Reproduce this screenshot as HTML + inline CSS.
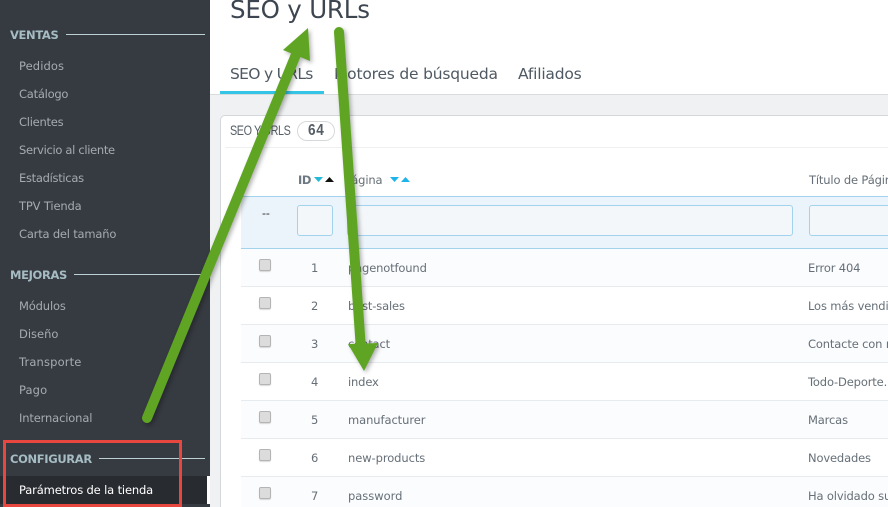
<!DOCTYPE html>
<html lang="es">
<head>
<meta charset="utf-8">
<style>
html,body{margin:0;padding:0;background:#fff}
body{width:888px;height:507px;position:relative;overflow:hidden;font-family:"DejaVu Sans","Liberation Sans",sans-serif}
.a{position:absolute;white-space:nowrap}
.box{position:absolute;box-sizing:border-box}
.m{left:19px;font-size:11.5px;letter-spacing:-.15px;color:#a4acb1;line-height:16px}
.h{left:10px;font-size:11.5px;font-weight:bold;letter-spacing:-.35px;color:#a6bcc3;line-height:16px}
.t{font-size:11.5px;letter-spacing:-.15px;color:#666f77;line-height:16px}
.n{left:311px}.p{left:348px}.q{left:808px}
.cb{position:absolute;left:259px;width:12px;height:12px;box-sizing:border-box;background:#dcdcdc;border:1px solid #b4b4b4;border-radius:2px;box-shadow:0 1px 1px rgba(0,0,0,.15)}
.row{position:absolute;left:241px;width:647px;height:37px;box-sizing:border-box;border-bottom:1px solid #e6ebef}
</style>
</head>
<body>
<div class="box" style="left:210px;top:0;width:678px;height:94px;background:#fff"></div>
<div class="box" style="left:210px;top:94px;width:678px;height:413px;background:#eff1f2;border-top:1px solid #d9dbdc"></div>

<div class="a" style="left:230px;top:-8px;font-size:24.5px;line-height:36px;letter-spacing:-.2px;color:#3d4650;font-family:'DejaVu Sans',sans-serif">SEO y URLs</div>
<div class="a" style="left:230px;top:64px;font-size:15.5px;line-height:20px;letter-spacing:-.7px;color:#4f5963">SEO y URLs</div>
<div class="a" style="left:334px;top:64px;font-size:15.5px;line-height:20px;letter-spacing:-.2px;color:#4f5963">Motores de búsqueda</div>
<div class="a" style="left:518px;top:64px;font-size:15.5px;line-height:20px;letter-spacing:-.2px;color:#4f5963">Afiliados</div>
<div class="box" style="left:220px;top:91px;width:104px;height:3px;background:#34c5e6"></div>

<div class="box" style="left:220px;top:115px;width:668px;height:392px;background:#fff;border:1px solid #d3d8db;border-right:0;border-bottom:0;border-radius:5px 0 0 0"></div>
<div class="a" style="left:230px;top:123px;font-family:'Liberation Sans',sans-serif;font-size:13.5px;line-height:16px;letter-spacing:-.5px;color:#555e66;transform:scaleX(.8);transform-origin:left">SEO Y URLS</div>
<div class="box" style="left:297px;top:121px;width:38px;height:20px;border:1px solid #d6d9db;border-radius:10px;background:#fff"></div>
<div class="a" style="left:308px;top:122px;font-family:'Liberation Sans',sans-serif;font-size:16px;font-weight:bold;line-height:18px;letter-spacing:.8px;color:#555e66;transform:scaleX(.85);transform-origin:left">64</div>
<div class="box" style="left:225px;top:147px;width:663px;height:1px;background:#eef0f1"></div>

<div class="a t" style="left:298px;top:172px;font-weight:bold;color:#6d7882;letter-spacing:-.4px">ID</div>
<svg class="a" style="left:313px;top:176px" width="24" height="8" viewBox="0 0 24 8"><path d="M1 1h9L5.500 6z" fill="#25b9d7"/><path d="M12 6h9L16.500 1z" fill="#111"/></svg>
<div class="a t" style="left:345px;top:172px">Página</div>
<svg class="a" style="left:389px;top:176px" width="24" height="8" viewBox="0 0 24 8"><path d="M1 1h9L5.500 6z" fill="#1cb4ea"/><path d="M12 6h9L16.500 1z" fill="#1cb4ea"/></svg>
<div class="a t" style="left:809px;top:172px">Título de Págir</div>

<div class="box" style="left:241px;top:196px;width:647px;height:53px;background:#ebf4fa;border-top:1px solid #a3d3ec;border-bottom:1px solid #a3d3ec"></div>
<div class="a t" style="left:262px;top:205px;color:#333;font-family:'Liberation Sans',sans-serif;font-size:12px">--</div>
<div class="box" style="left:297px;top:205px;width:36px;height:31px;background:#f3f7f9;border:1px solid #a3d3ec;border-radius:3px"></div>
<div class="box" style="left:347px;top:205px;width:446px;height:31px;background:#f3f7f9;border:1px solid #a3d3ec;border-radius:3px"></div>
<div class="box" style="left:809px;top:205px;width:90px;height:31px;background:#f3f7f9;border:1px solid #a3d3ec;border-radius:3px"></div>

<div class="row" style="top:249px;height:38px;background:#fbfcfe"></div>
<div class="row" style="top:287px;height:38px;background:#fff"></div>
<div class="row" style="top:325px;height:38px;background:#fbfcfe"></div>
<div class="row" style="top:363px;height:38px;background:#fff"></div>
<div class="row" style="top:401px;height:38px;background:#fbfcfe"></div>
<div class="row" style="top:439px;height:38px;background:#fff"></div>
<div class="row" style="top:477px;height:30px;background:#fbfcfe;border:0"></div>

<div class="cb" style="top:259px"></div><div class="cb" style="top:297px"></div><div class="cb" style="top:335px"></div><div class="cb" style="top:373px"></div><div class="cb" style="top:411px"></div><div class="cb" style="top:449px"></div><div class="cb" style="top:487px"></div>

<div class="a t n" style="top:260px">1</div><div class="a t p" style="top:260px">pagenotfound</div><div class="a t q" style="top:260px">Error 404</div>
<div class="a t n" style="top:298px">2</div><div class="a t p" style="top:298px">best-sales</div><div class="a t q" style="top:298px">Los más vendi</div>
<div class="a t n" style="top:336px">3</div><div class="a t p" style="top:336px">contact</div><div class="a t q" style="top:336px">Contacte con n</div>
<div class="a t n" style="top:374px">4</div><div class="a t p" style="top:374px">index</div><div class="a t q" style="top:374px">Todo-Deporte.</div>
<div class="a t n" style="top:412px">5</div><div class="a t p" style="top:412px;letter-spacing:-.08px">manufacturer</div><div class="a t q" style="top:412px">Marcas</div>
<div class="a t n" style="top:450px">6</div><div class="a t p" style="top:450px;letter-spacing:-.08px">new-products</div><div class="a t q" style="top:450px">Novedades</div>
<div class="a t n" style="top:488px">7</div><div class="a t p" style="top:488px;letter-spacing:-.03px">password</div><div class="a t q" style="top:488px">Ha olvidado su</div>

<div class="box" style="left:0;top:0;width:210px;height:507px;background:#363a41"></div>
<div class="a h" style="top:27px">VENTAS</div><div class="box" style="left:66px;top:34px;width:139px;height:1px;background:#bcd0d6"></div>
<div class="a m" style="top:58px;letter-spacing:.1px">Pedidos</div>
<div class="a m" style="top:86px;letter-spacing:-.25px">Catálogo</div>
<div class="a m" style="top:114px;letter-spacing:-.25px">Clientes</div>
<div class="a m" style="top:142px;letter-spacing:-.32px">Servicio al cliente</div>
<div class="a m" style="top:170px;letter-spacing:-.3px">Estadísticas</div>
<div class="a m" style="top:198px">TPV Tienda</div>
<div class="a m" style="top:226px;letter-spacing:-.2px">Carta del tamaño</div>
<div class="a h" style="top:267px">MEJORAS</div><div class="box" style="left:74px;top:274px;width:131px;height:1px;background:#bcd0d6"></div>
<div class="a m" style="top:298px">Módulos</div>
<div class="a m" style="top:326px;letter-spacing:0">Diseño</div>
<div class="a m" style="top:354px;letter-spacing:.15px">Transporte</div>
<div class="a m" style="top:382px;letter-spacing:.1px">Pago</div>
<div class="a m" style="top:410px">Internacional</div>
<div class="a h" style="top:451px">CONFIGURAR</div><div class="box" style="left:99px;top:458px;width:106px;height:1px;background:#bcd0d6"></div>
<div class="box" style="left:0;top:476px;width:207px;height:28px;background:#282b30"></div>
<div class="box" style="left:207px;top:476px;width:3px;height:28px;background:#fff"></div>
<div class="a m" style="top:482px;color:#fff">Parámetros de la tienda</div>
<div class="box" style="left:3px;top:440px;width:179px;height:67px;border:3px solid #e8473f"></div>

<svg class="a" style="left:0;top:0;filter:drop-shadow(2px 2px 2px rgba(0,0,0,.3))" width="888" height="507" viewBox="0 0 888 507">
<path d="M147 418L297 52" stroke="#5fa523" stroke-width="10" stroke-linecap="round" fill="none"/>
<path d="M308 28L283 50L310 61z" fill="#5fa523"/>
<path d="M339 32L361 350" stroke="#5fa523" stroke-width="10" stroke-linecap="round" fill="none"/>
<path d="M364 371L348 344L378 343z" fill="#5fa523"/>
</svg>
</body>
</html>
